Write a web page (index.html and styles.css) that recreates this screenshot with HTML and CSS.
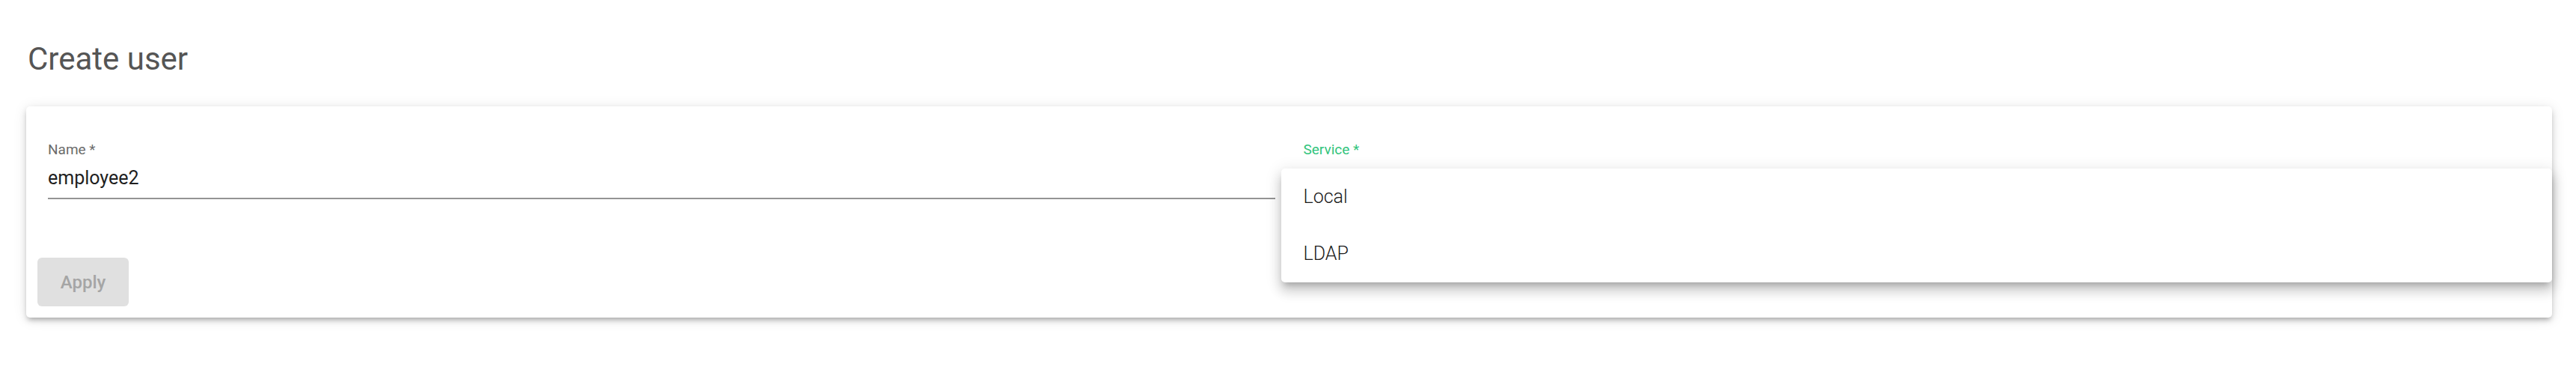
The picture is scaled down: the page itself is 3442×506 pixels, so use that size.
FILE: index.html
```html
<!DOCTYPE html>
<html lang="en">
<head>
<meta charset="utf-8">
<title>Create user</title>
<link rel="stylesheet" href="styles.css">
</head>
<body>
<main class="page">
  <h1 class="title">Create user</h1>
  <section class="card">
    <div class="fields">
      <div class="field">
        <label class="field-label">Name *</label>
        <div class="field-input">employee2</div>
      </div>
      <div class="field field-select">
        <label class="field-label field-label-focus">Service *</label>
        <div class="field-input"></div>
        <div class="menu">
          <div class="menu-item">Local</div>
          <div class="menu-item">LDAP</div>
        </div>
      </div>
    </div>
    <div class="actions">
      <button class="btn" disabled>Apply</button>
    </div>
  </section>
</main>
</body>
</html>
```
FILE: styles.css
```css
html, body {
  margin: 0;
  padding: 0;
  background: #ffffff;
}

body {
  font-family: Roboto, "Liberation Sans", Arial, sans-serif;
  color: rgba(0, 0, 0, 0.87);
}

.page {
  padding: 55px 32px 40px 35px;
}

.title {
  margin: 0 0 39px 2px;
  font-size: 42px;
  line-height: 48px;
  font-weight: 400;
  color: #555555;
}

.card {
  background: #ffffff;
  border-radius: 5px;
  box-shadow: 0 5px 6px -3px rgba(0, 0, 0, 0.22),
              0 4px 8px 0 rgba(0, 0, 0, 0.12),
              0 2px 18px 0 rgba(0, 0, 0, 0.10);
  padding: 47px 29px 14px 29px;
  height: 282px;
  box-sizing: border-box;
}

.fields {
  display: grid;
  grid-template-columns: 1fr 1fr;
  column-gap: 38px;
}

.field {
  position: relative;
  display: flex;
  flex-direction: column;
}

.field-label {
  font-size: 19px;
  line-height: 22px;
  color: #6b6b6b;
  margin-bottom: 12px;
}

.field-label-focus {
  color: #30c47c;
}

.field-input {
  font-size: 25px;
  line-height: 30px;
  height: 30px;
  color: #1f1f1f;
  padding-bottom: 11px;
  border-bottom: 2px solid #949494;
}

.menu {
  position: absolute;
  top: 36px;
  left: -30px;
  right: -29px;
  background: #ffffff;
  border-radius: 5px;
  box-shadow: 0 7px 8px -4px rgba(0, 0, 0, 0.22),
              0 12px 15px 2px rgba(0, 0, 0, 0.12),
              0 4px 20px 3px rgba(0, 0, 0, 0.10);
  z-index: 2;
}

.menu-item {
  height: 76px;
  line-height: 76px;
  padding: 0 30px;
  font-size: 25px;
  font-weight: 300;
  color: #1a1a1a;
}

.actions {
  display: flex;
  margin-top: 78px;
  margin-left: -14px;
}

.btn {
  width: 122px;
  height: 65px;
  border: none;
  border-radius: 6px;
  background: #e0e0e0;
  color: #a5a5a5;
  font-family: Roboto, "Liberation Sans", Arial, sans-serif;
  font-size: 24px;
  font-weight: 500;
  padding: 0;
}
```
